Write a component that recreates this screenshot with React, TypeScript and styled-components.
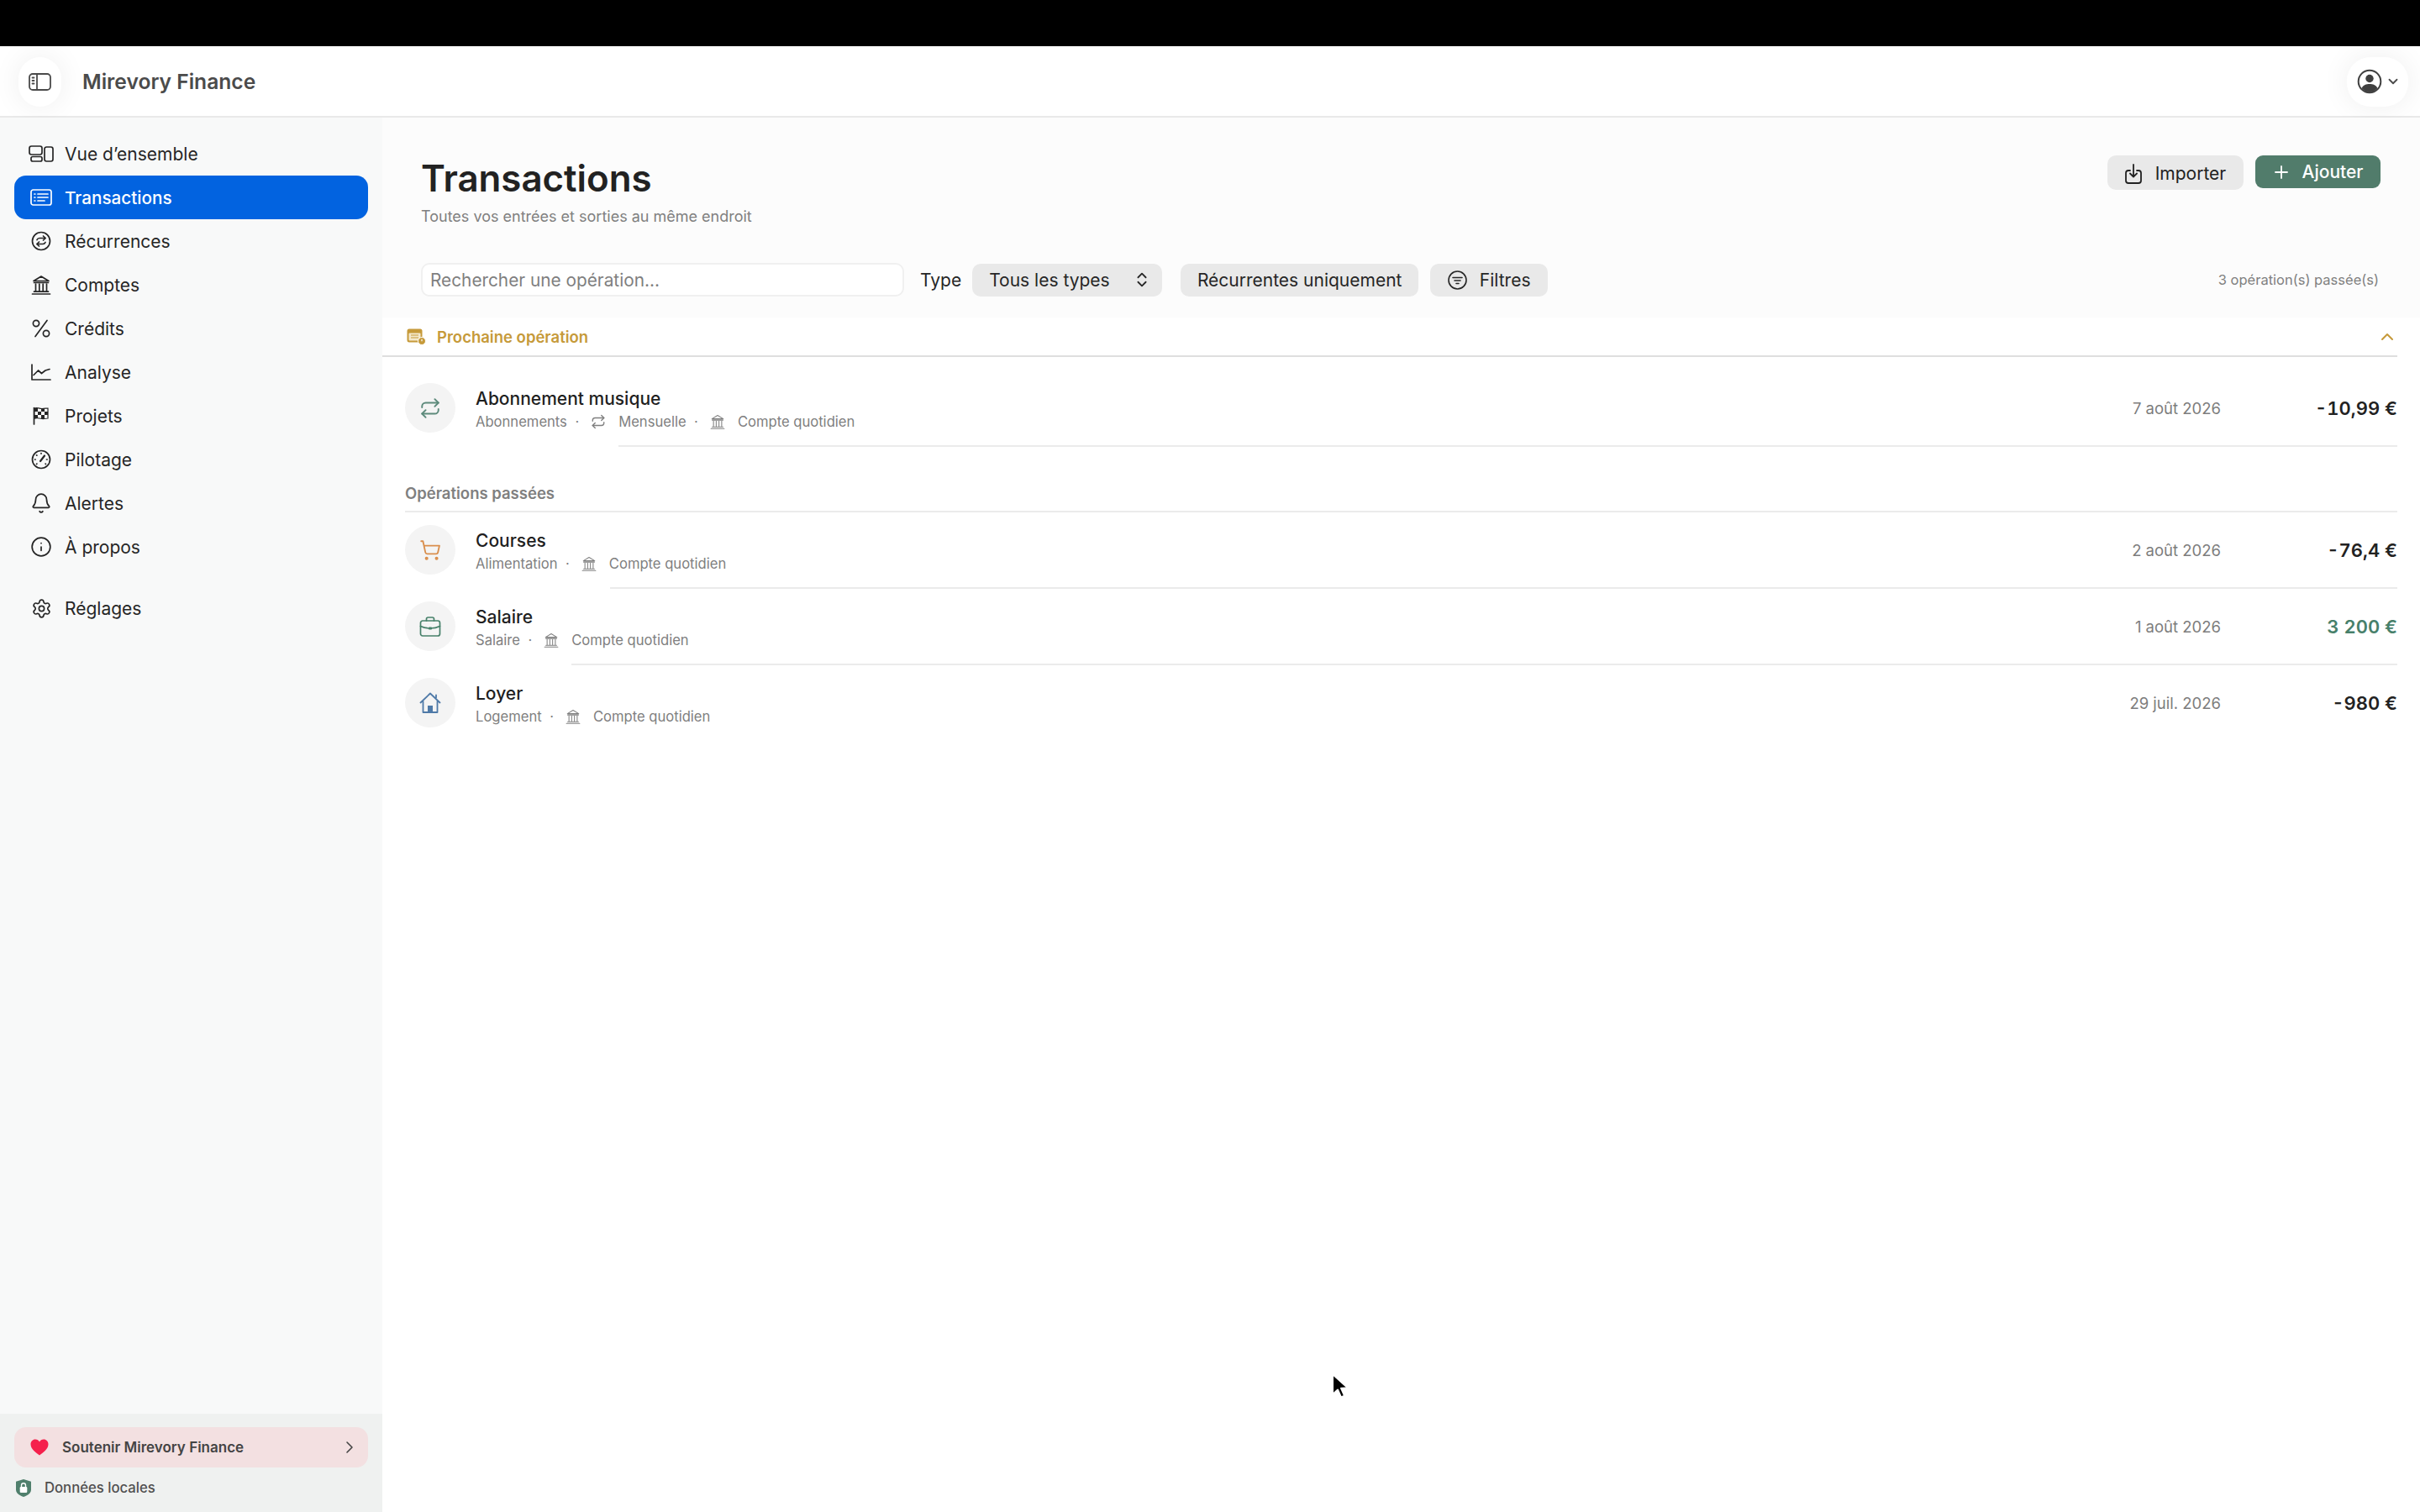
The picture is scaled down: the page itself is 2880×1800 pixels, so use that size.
import React from "react";
import styled, { createGlobalStyle } from "styled-components";
import { Repeat, ShoppingCart, Bell, Info, Settings, ChevronRight, ChevronUp, ChevronDown, ChevronsUpDown, Plus } from "lucide-react";

const Global = createGlobalStyle`
  html, body { margin: 0; padding: 0; background: #fff; }
  body { font-family: Inter, "Liberation Sans", sans-serif; color: #1f1f1f; }
  * { box-sizing: border-box; }
`;

const Page = styled.div`
  position: relative;
  width: 2880px;
  height: 1800px;
  overflow: hidden;
  display: flex;
  flex-direction: column;
  background: #fff;
`;
const BlackBar = styled.div`
  height: 55px;
  flex: none;
  background: #000;
`;
const Header = styled.header`
  height: 85px;
  flex: none;
  display: flex;
  align-items: center;
  justify-content: space-between;
  padding: 1px 14px 0 22px;
  background: #fff;
  border-bottom: 2px solid #e9e9e9;
`;
const HeaderLeft = styled.div`
  display: flex;
  align-items: center;
  gap: 25px;
`;
const RoundButton = styled.div<{ $w: number; $pl?: number }>`
  width: ${(p) => p.$w}px;
  height: 59px;
  border-radius: 28px;
  background: #fff;
  box-shadow: 0 0 34px rgba(0, 0, 0, 0.07);
  display: flex;
  align-items: center;
  justify-content: ${(p) => (p.$pl ? "flex-start" : "center")};
  padding-left: ${(p) => p.$pl ?? 0}px;
  gap: 4px;
  color: #4a4a4a;
`;
const AppTitle = styled.div`
  font-size: 24.6px;
  font-weight: 600;
  color: #4b4b4b;
`;
const Body = styled.div`
  flex: 1;
  display: flex;
  min-height: 0;
`;
const Sidebar = styled.aside`
  width: 455px;
  flex: none;
  display: flex;
  flex-direction: column;
  justify-content: space-between;
  background: #f8f9f9;
`;
const NavArea = styled.nav`
  padding: 17px 17px 0;
`;
const NavGroup = styled.div<{ $mt?: number }>`
  margin-top: ${(p) => p.$mt ?? 0}px;
`;
const NavItem = styled.div<{ $active?: boolean }>`
  height: 52px;
  display: flex;
  align-items: center;
  gap: 13px;
  padding-left: 17px;
  border-radius: 14px;
  font-size: ${(p) => (p.$active ? 20.7 : 21)}px;
  font-weight: ${(p) => (p.$active ? 500 : 400)};
  color: ${(p) => (p.$active ? "#fff" : "#262626")};
  background: ${(p) => (p.$active ? "#0263e0" : "transparent")};
`;
const IconSlot = styled.span`
  width: 30px;
  height: 30px;
  flex: none;
  display: flex;
  align-items: center;
  justify-content: center;
`;
const SideFooter = styled.div`
  height: 117px;
  padding: 16px 17px 0;
  background: #eff1f0;
`;
const Support = styled.div`
  height: 48px;
  display: flex;
  align-items: center;
  padding: 0 10px 0 19px;
  border-radius: 14px;
  background: #f3e0e1;
  font-size: 17px;
  font-weight: 600;
  color: #444;
`;
const SupportLabel = styled.span`
  flex: 1;
  margin-left: 16px;
`;
const LocalData = styled.div`
  display: flex;
  align-items: center;
  gap: 16px;
  height: 24px;
  margin: 12px 0 0 2px;
  font-size: 16.7px;
  font-weight: 500;
  color: #4f4f4f;
`;
const Main = styled.main`
  flex: 1;
  min-width: 0;
  display: flex;
  flex-direction: column;
`;
const TopPanel = styled.section`
  height: 238px;
  flex: none;
  padding: 45px 47px 0 46px;
  background: #fcfcfc;
`;
const TitleRow = styled.div`
  display: flex;
  justify-content: space-between;
  align-items: flex-start;
`;
const PageTitle = styled.h1`
  margin: 0;
  font-size: 43.8px;
  line-height: 56px;
  font-weight: 600;
  color: #222;
`;
const Subtitle = styled.p`
  margin: 6px 0 0;
  font-size: 18px;
  line-height: 22px;
  color: #808080;
`;
const Actions = styled.div`
  display: flex;
  align-items: flex-start;
  gap: 14px;
`;
const ImportButton = styled.div`
  width: 162px;
  height: 41px;
  display: flex;
  align-items: center;
  justify-content: center;
  gap: 16px;
  padding-top: 2px;
  border-radius: 10px;
  background: #e9e9e9;
  font-size: 21px;
  color: #222;
`;
const AddButton = styled.div`
  width: 149px;
  height: 39px;
  display: flex;
  align-items: center;
  justify-content: center;
  gap: 13px;
  padding-right: 2px;
  border-radius: 9px;
  background: #517c6b;
  font-size: 21px;
  font-weight: 500;
  color: #fff;
`;
const Toolbar = styled.div`
  display: flex;
  align-items: center;
  margin-top: 44px;
`;
const Search = styled.div`
  width: 575px;
  height: 40px;
  display: flex;
  align-items: center;
  padding-left: 9px;
  border: 2px solid #f0f0f0;
  border-radius: 10px;
  background: #fff;
  font-size: 20.8px;
  color: #7f7f7f;
`;
const TypeLabel = styled.span`
  margin: 0 13px 0 19px;
  font-size: 21px;
  color: #262626;
`;
const Pill = styled.div<{ $w: number; $mr?: number }>`
  width: ${(p) => p.$w}px;
  height: 39px;
  margin-right: ${(p) => p.$mr ?? 0}px;
  display: flex;
  align-items: center;
  justify-content: center;
  gap: 15px;
  border-radius: 10px;
  background: #e9e9e9;
  font-size: 21px;
  color: #262626;
`;
const SelectPill = styled(Pill)`
  justify-content: space-between;
  padding: 0 13px 0 20px;
`;
const Count = styled.span`
  margin: 0 2px 0 auto;
  font-size: 16.5px;
  color: #808080;
`;
const UpcomingBar = styled.div`
  height: 47px;
  flex: none;
  display: flex;
  align-items: center;
  margin-right: 27px;
  padding: 1px 0 0 29px;
  border-bottom: 2px solid #dedede;
  color: #c69a3a;
  font-size: 18.5px;
  font-weight: 600;
`;
const UpcomingLabel = styled.span`
  flex: 1;
  margin-left: 13px;
`;
const List = styled.div`
  padding: 16px 27px 0;
`;
const Row = styled.div`
  height: 89px;
  display: flex;
  align-items: center;
`;
const Bubble = styled.div<{ $color: string }>`
  width: 60px;
  height: 59px;
  flex: none;
  border-radius: 50%;
  background: #f4f4f4;
  display: flex;
  align-items: center;
  justify-content: center;
  color: ${(p) => p.$color};
`;
const RowText = styled.div`
  flex: 1;
  margin-left: 24px;
  min-width: 0;
  padding-top: 3px;
`;
const RowTitle = styled.div`
  font-size: 21px;
  line-height: 26px;
  font-weight: 500;
  color: #1f1f1f;
`;
const Meta = styled.div`
  display: flex;
  align-items: center;
  height: 22px;
  margin-top: 3px;
  font-size: 16.6px;
  color: #808080;
`;
const MetaDot = styled.span`
  margin: 0 10px 0 9.5px;
`;
const MetaIcon = styled.span`
  display: flex;
  width: 18px;
  margin: 0 15px 0 4px;
  color: #808080;
`;
const DateText = styled.div`
  font-size: 18.5px;
  color: #7d7d7d;
  text-align: right;
`;
const Amount = styled.div<{ $positive?: boolean }>`
  width: 210px;
  text-align: right;
  font-size: 22px;
  font-weight: 600;
  font-variant-numeric: tabular-nums;
  color: ${(p) => (p.$positive ? "#47806a" : "#222")};
`;
const Divider = styled.div<{ $inset: number }>`
  height: 2px;
  margin-left: ${(p) => p.$inset}px;
  background: #ebebeb;
`;
const SectionTitle = styled.div`
  padding-top: 45px;
  height: 76px;
  font-size: 18.5px;
  line-height: 20px;
  font-weight: 600;
  color: #808080;
`;
const Cursor = styled.svg`
  position: absolute;
  left: 1582px;
  top: 1633px;
`;

const S = { fill: "none", stroke: "currentColor", strokeLinecap: "round" as const, strokeLinejoin: "round" as const };

const SidebarToggle = () => (
  <svg width="27" height="21" viewBox="0 0 27 21" {...S} strokeWidth="1.8">
    <rect x="1" y="1" width="25" height="19" rx="4" />
    <path d="M10 1v19M4.5 5.5h2M4.5 9h2M4.5 12.5h2" />
  </svg>
);
const OverviewIcon = () => (
  <svg width="30" height="20" viewBox="0 0 30 20" {...S} strokeWidth="1.7">
    <rect x="1" y="1" width="15" height="10" rx="2.4" />
    <rect x="3" y="13.5" width="13" height="5.5" rx="2" />
    <rect x="19" y="2" width="10" height="17" rx="2.4" />
  </svg>
);
const ListCardIcon = () => (
  <svg width="26" height="20" viewBox="0 0 26 20" {...S} strokeWidth="1.7">
    <rect x="1" y="1" width="24" height="18" rx="2.5" />
    <path d="M9 6h12M9 10h12M9 14h8M5 6h.8M5 10h.8M5 14h.8" />
  </svg>
);
const CircleArrows = () => (
  <svg width="24" height="24" viewBox="0 0 24 24" {...S} strokeWidth="1.7">
    <circle cx="12" cy="12" r="10.5" />
    <path d="M7 10.5c.6-1.4 1.7-2 3-2h7M14.5 6l2.7 2.5-2.7 2.5M17 13.5c-.6 1.4-1.7 2-3 2H7M9.5 13l-2.7 2.5L9.5 18" />
  </svg>
);
const BankIcon = ({ size = 24, sw = 1.7 }: { size?: number; sw?: number }) => (
  <svg width={size} height={size} viewBox="0 0 24 24" {...S} strokeWidth={sw}>
    <path d="M3 7.5 12 2l9 5.500zM3.500 9.500h17" />
    <path d="M5.500 11v8M9.800 11v8M14.200 11v8M18.500 11v8M3.500 20.200h17M1.500 23h21" />
  </svg>
);
const PercentIcon = () => (
  <svg width="22" height="22" viewBox="0 0 22 22" {...S} strokeWidth="1.7">
    <path d="M18 1.500 4 20.500" />
    <circle cx="5" cy="5" r="3.600" />
    <circle cx="17" cy="17" r="3.600" />
  </svg>
);
const ChartIcon = () => (
  <svg width="24" height="20" viewBox="0 0 24 20" {...S} strokeWidth="1.700">
    <path d="M1 1v18h22" />
    <path d="M3 13.500 8.500 8l4 3.500L17 8l5-1.500" />
  </svg>
);
const FlagIcon = () => (
  <svg width="22" height="22" viewBox="0 0 22 22">
    <path d="M2.500 1.500v19.500" stroke="currentColor" strokeWidth="1.700" fill="none" strokeLinecap="round" />
    <path d="M3 2c3-1.500 5 .5 9 .5 3 0 5-.5 7-.5v12c-2 0-4 .8-7 .5-4-.4-6-1.700-9-.2z" fill="#fff" stroke="currentColor" strokeWidth="1.200" />
    <path d="M3 2h4v4H3zM11 2.500h4v3.500h-4zM7 6h4v4H7zM15 6h4v4h-4zM3 10h4v4H3zM11 10h4v4.500h-4z" fill="currentColor" />
  </svg>
);
const GaugeIcon = () => (
  <svg width="24" height="24" viewBox="0 0 24 24" {...S} strokeWidth="1.700">
    <circle cx="12" cy="12" r="10.500" />
    <path d="M11 14l5-6.500" strokeWidth="2.200" />
    <path d="M12 4.500v.6M6.500 6.800l.4.4M4.500 12h.6M18.500 12h.6M6.500 17.500l.4-.4M17.500 17.500l-.4-.4" />
  </svg>
);
const AccountIcon = () => (
  <svg width="30" height="30" viewBox="0 0 30 30">
    <circle cx="15" cy="15" r="13.300" fill="none" stroke="#404040" strokeWidth="2" />
    <circle cx="15" cy="11.500" r="4.700" fill="#404040" />
    <path d="M5.500 23c2-3.800 5.500-5 9.500-5s7.500 1.200 9.500 5c-2.500 3-5.800 5-9.500 5s-7-2-9.500-5z" fill="#404040" />
  </svg>
);
const ImportIcon = () => (
  <svg width="20" height="24" viewBox="0 0 20 24" {...S} strokeWidth="1.800">
    <path d="M6 8H4a3 3 0 0 0-3 3v9a3 3 0 0 0 3 3h12a3 3 0 0 0 3-3v-9a3 3 0 0 0-3-3h-2" />
    <path d="M10 1v14M6 11.500l4 4 4-4" />
  </svg>
);
const FilterCircle = () => (
  <svg width="23" height="23" viewBox="0 0 23 23" {...S} strokeWidth="1.600">
    <circle cx="11.500" cy="11.500" r="10.500" />
    <path d="M6 8.500h11M8 12h7M10 15.500h3" />
  </svg>
);
const CalendarBadge = () => (
  <svg width="23" height="20" viewBox="0 0 23 20">
    <rect x="0.500" y="0.500" width="18" height="16" rx="2.500" fill="#c69a3a" />
    <rect x="2.500" y="5.500" width="14" height="9" rx="1" fill="#f4e8cc" />
    <path d="M5 8h9M5 11h9" stroke="#c69a3a" strokeWidth="1" />
    <circle cx="18" cy="15" r="4.500" fill="#c69a3a" stroke="#fff" />
    <path d="M18 12.800v2.400" stroke="#fff" strokeWidth="1.200" />
  </svg>
);
const CaseIcon = () => (
  <svg width="26" height="26" viewBox="0 0 26 26" {...S} strokeWidth="1.700">
    <rect x="1.500" y="6" width="23" height="18" rx="2.500" />
    <path d="M8.500 6V4a2 2 0 0 1 2-2h5a2 2 0 0 1 2 2v2" />
    <path d="M1.500 12.500c4 2 8 2.500 11.500 2.500s7.500-.5 11.500-2.500" />
    <rect x="11" y="13.500" width="4" height="3" rx=".8" fill="currentColor" stroke="none" />
  </svg>
);
const HomeIcon = () => (
  <svg width="26" height="26" viewBox="0 0 26 26" {...S} strokeWidth="1.800">
    <path d="M1.500 12.500 13 1.500l11.500 11M4.500 10.500V24h17V10.500M20 3.500v3" />
    <rect x="10" y="16" width="6" height="8" fill="currentColor" stroke="none" />
  </svg>
);
const Heart = () => (
  <svg width="22" height="20" viewBox="0 0 22 20">
    <path d="M11 19.500C7 16.500.5 12.500.5 6.300.5 3 3 .5 6 .5c2.200 0 4 1.200 5 3 1-1.800 2.800-3 5-3 3 0 5.500 2.500 5.500 5.800 0 6.200-6.500 10.200-10.500 13.200z" fill="#f5204c" />
  </svg>
);
const ShieldLock = () => (
  <svg width="18" height="21" viewBox="0 0 18 21">
    <path d="M9 0l9 2.800v9.700c0 4-4 6.700-9 8.500-5-1.800-9-4.500-9-8.500V2.800z" fill="#4f7f6c" />
    <rect x="4.700" y="9" width="8.600" height="7" rx="1.300" fill="#fff" />
    <path d="M6.500 9V7.200a2.500 2.500 0 0 1 5 0V9" stroke="#fff" strokeWidth="1.400" fill="none" />
  </svg>
);

const mainNav: [string, React.ReactNode][] = [
  ["Vue d’ensemble", <OverviewIcon />],
  ["Transactions", <ListCardIcon />],
  ["Récurrences", <CircleArrows />],
  ["Comptes", <BankIcon />],
  ["Crédits", <PercentIcon />],
  ["Analyse", <ChartIcon />],
  ["Projets", <FlagIcon />],
  ["Pilotage", <GaugeIcon />],
  ["Alertes", <Bell size={26} strokeWidth={1.6} />],
  ["À propos", <Info size={26} strokeWidth={1.6} />],
];

type Op = {
  title: string;
  category: string;
  recur?: boolean;
  date: string;
  amount: string;
  positive?: boolean;
  color: string;
  icon: React.ReactNode;
};

const upcoming: Op = {
  title: "Abonnement musique",
  category: "Abonnements",
  recur: true,
  date: "7 août 2026",
  amount: "-10,99 €",
  color: "#5d8a7b",
  icon: <Repeat size={26} strokeWidth={1.8} />,
};
const past: (Op & { inset: number })[] = [
  { title: "Courses", category: "Alimentation", date: "2 août 2026", amount: "-76,4 €", color: "#d98e4c", icon: <ShoppingCart size={26} strokeWidth={1.7} />, inset: 244 },
  { title: "Salaire", category: "Salaire", date: "1 août 2026", amount: "3 200 €", positive: true, color: "#47806a", icon: <CaseIcon />, inset: 198 },
  { title: "Loyer", category: "Logement", date: "29 juil. 2026", amount: "-980 €", color: "#4f7aa8", icon: <HomeIcon />, inset: 0 },
];

const OpRow = ({ op }: { op: Op }) => (
  <Row>
    <Bubble $color={op.color}>{op.icon}</Bubble>
    <RowText>
      <RowTitle>{op.title}</RowTitle>
      <Meta>
        {op.category}
        <MetaDot>·</MetaDot>
        {op.recur && (
          <>
            <MetaIcon><Repeat size={18} strokeWidth={1.8} /></MetaIcon>
            Mensuelle
            <MetaDot>·</MetaDot>
          </>
        )}
        <MetaIcon><BankIcon size={18} sw={1.4} /></MetaIcon>
        Compte quotidien
      </Meta>
    </RowText>
    <DateText>{op.date}</DateText>
    <Amount $positive={op.positive}>{op.amount}</Amount>
  </Row>
);

export default function App() {
  return (
    <Page>
      <Global />
      <BlackBar />
      <Header>
        <HeaderLeft>
          <RoundButton $w={51}><SidebarToggle /></RoundButton>
          <AppTitle>Mirevory Finance</AppTitle>
        </HeaderLeft>
        <RoundButton $w={73} $pl={12}>
          <AccountIcon />
          <ChevronDown size={18} strokeWidth={2.4} />
        </RoundButton>
      </Header>
      <Body>
        <Sidebar>
          <NavArea>
            <NavGroup>
              {mainNav.map(([label, icon]) => (
                <NavItem key={label} $active={label === "Transactions"}>
                  <IconSlot>{icon}</IconSlot>
                  {label}
                </NavItem>
              ))}
            </NavGroup>
            <NavGroup $mt={21}>
              <NavItem>
                <IconSlot><Settings size={25} strokeWidth={1.6} /></IconSlot>
                Réglages
              </NavItem>
            </NavGroup>
          </NavArea>
          <SideFooter>
            <Support>
              <Heart />
              <SupportLabel>Soutenir Mirevory Finance</SupportLabel>
              <ChevronRight size={24} strokeWidth={1.6} />
            </Support>
            <LocalData>
              <ShieldLock />
              Données locales
            </LocalData>
          </SideFooter>
        </Sidebar>
        <Main>
          <TopPanel>
            <TitleRow>
              <div>
                <PageTitle>Transactions</PageTitle>
                <Subtitle>Toutes vos entrées et sorties au même endroit</Subtitle>
              </div>
              <Actions>
                <ImportButton><ImportIcon />Importer</ImportButton>
                <AddButton><Plus size={24} strokeWidth={1.8} />Ajouter</AddButton>
              </Actions>
            </TitleRow>
            <Toolbar>
              <Search>Rechercher une opération...</Search>
              <TypeLabel>Type</TypeLabel>
              <SelectPill $w={226} $mr={22}>
                Tous les types
                <ChevronsUpDown size={22} strokeWidth={2} />
              </SelectPill>
              <Pill $w={283} $mr={14}>Récurrentes uniquement</Pill>
              <Pill $w={140}><FilterCircle />Filtres</Pill>
              <Count>3 opération(s) passée(s)</Count>
            </Toolbar>
          </TopPanel>
          <UpcomingBar>
            <CalendarBadge />
            <UpcomingLabel>Prochaine opération</UpcomingLabel>
            <ChevronUp size={24} strokeWidth={2} />
          </UpcomingBar>
          <List>
            <OpRow op={upcoming} />
            <Divider $inset={254} />
            <SectionTitle>Opérations passées</SectionTitle>
            <Divider $inset={0} />
            {past.map((op, i) => (
              <React.Fragment key={op.title}>
                <OpRow op={op} />
                {i < past.length - 1 && <Divider $inset={op.inset} />}
              </React.Fragment>
            ))}
          </List>
        </Main>
      </Body>
      <Cursor width="24" height="34" viewBox="0 0 24 34">
        <path d="M4 3v24l6-5.500 4 9 4-1.800-4-9 8-.500z" fill="#000" stroke="#fff" strokeWidth="2" strokeLinejoin="round" />
      </Cursor>
    </Page>
  );
}
